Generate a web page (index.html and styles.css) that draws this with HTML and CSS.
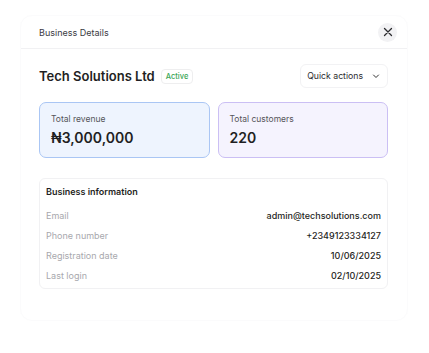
FILE: index.html
```html
<!DOCTYPE html>
<html lang="en">
<head>
  <meta charset="UTF-8">
  <meta name="viewport" content="width=device-width, initial-scale=1.0">
  <title>Business Details</title>
  <link rel="stylesheet" href="styles.css">
</head>
<body>
  <div class="modal">
    <div class="modal-header">
      <span class="modal-title">Business Details</span>
      <button class="close-btn" aria-label="Close">
        <svg width="10" height="10" viewBox="0 0 10 10"><path d="M1.5 1.5l7 7M8.5 1.5l-7 7" stroke="#2b2b2e" stroke-width="1.3" stroke-linecap="round"/></svg>
      </button>
    </div>
    <div class="modal-body">
      <div class="biz-head">
        <div class="biz-name">
          <h2>Tech Solutions Ltd</h2>
          <span class="badge">Active</span>
        </div>
        <button class="quick-btn">Quick actions
          <svg width="8" height="8" viewBox="0 0 8 8"><path d="M1.5 3l2.5 2.5L6.5 3" fill="none" stroke="#333" stroke-width="1" stroke-linecap="round" stroke-linejoin="round"/></svg>
        </button>
      </div>
      <div class="stats">
        <div class="stat revenue">
          <div class="stat-label">Total revenue</div>
          <div class="stat-value">₦3,000,000</div>
        </div>
        <div class="stat customers">
          <div class="stat-label">Total customers</div>
          <div class="stat-value">220</div>
        </div>
      </div>
      <div class="info">
        <div class="info-title">Business information</div>
        <div class="info-row"><span class="info-label">Email</span><span class="info-value">admin@techsolutions.com</span></div>
        <div class="info-row"><span class="info-label">Phone number</span><span class="info-value">+2349123334127</span></div>
        <div class="info-row"><span class="info-label">Registration date</span><span class="info-value">10/06/2025</span></div>
        <div class="info-row"><span class="info-label">Last login</span><span class="info-value">02/10/2025</span></div>
      </div>
    </div>
  </div>
</body>
</html>
```

FILE: styles.css
```css
:root {
  --text: #1f1f23;
  --muted: #a8a8ad;
  --line: #f1f1f3;
  --green: #3aa655;
}
body {
  margin: 0;
  background: #ffffff;
  font-family: Inter, 'Noto Sans', sans-serif;
  color: var(--text);
}
.modal {
  box-sizing: border-box;
  margin: 15px 0 0 20px;
  width: 388px;
  height: 306px;
  border: 1px solid #fbfbfc;
  border-radius: 12px;
  background: #fff;
}
.modal-header {
  height: 32px;
  display: flex;
  align-items: center;
  justify-content: space-between;
  padding: 0 19px 0 18px;
  border-bottom: 1px solid var(--line);
}
.modal-title {
  font-size: 9px;
  color: #3a3a3f;
}
.close-btn {
  width: 19px;
  height: 19px;
  border-radius: 50%;
  border: none;
  background: #f2f2f4;
  display: flex;
  align-items: center;
  justify-content: center;
  padding: 0;
  margin-right: -9px;
}
.modal-body {
  padding: 15px 19px 0 18px;
}
.biz-head {
  display: flex;
  align-items: center;
  justify-content: space-between;
  height: 24px;
}
.biz-name {
  display: flex;
  align-items: center;
  gap: 6px;
}
.biz-name h2 {
  margin: 0;
  font-size: 13px;
  font-weight: 600;
  color: var(--text);
}
.badge {
  font-size: 7.5px;
  font-weight: 500;
  color: var(--green);
  border: 1px solid #eeeeef;
  border-radius: 4px;
  padding: 2px 4px;
}
.quick-btn {
  height: 24px;
  display: flex;
  align-items: center;
  gap: 9px;
  padding: 0 7px 0 6px;
  border: 1px solid #f2f2f4;
  border-radius: 6px;
  background: #fff;
  font-family: inherit;
  font-size: 8.7px;
  color: #2b2b2e;
}
.stats {
  margin-top: 14px;
  display: grid;
  grid-template-columns: 1fr 1fr;
  gap: 8px;
}
.stat {
  height: 56px;
  box-sizing: border-box;
  border-radius: 7px;
  padding: 11px 11px 0;
}
.stat.revenue {
  background: #eef4fe;
  border: 1px solid #aac6f4;
}
.stat.customers {
  background: #f5f3fe;
  border: 1px solid #cbbff4;
}
.stat-label {
  font-size: 8.5px;
  color: #55555a;
}
.stat-value {
  margin-top: 5px;
  font-size: 14px;
  font-weight: 600;
  color: var(--text);
}
.info {
  margin-top: 20px;
  border: 1px solid #f1f1f3;
  border-radius: 6px;
  padding: 4px 6px 3px;
}
.info-title {
  font-size: 9px;
  font-weight: 600;
  height: 17px;
  margin-bottom: 5px;
  display: flex;
  align-items: center;
}
.info-row {
  display: flex;
  justify-content: space-between;
  align-items: center;
  height: 20px;
  font-size: 9px;
}
.info-label {
  color: var(--muted);
}
.info-value {
  font-weight: 500;
  color: var(--text);
}
```
